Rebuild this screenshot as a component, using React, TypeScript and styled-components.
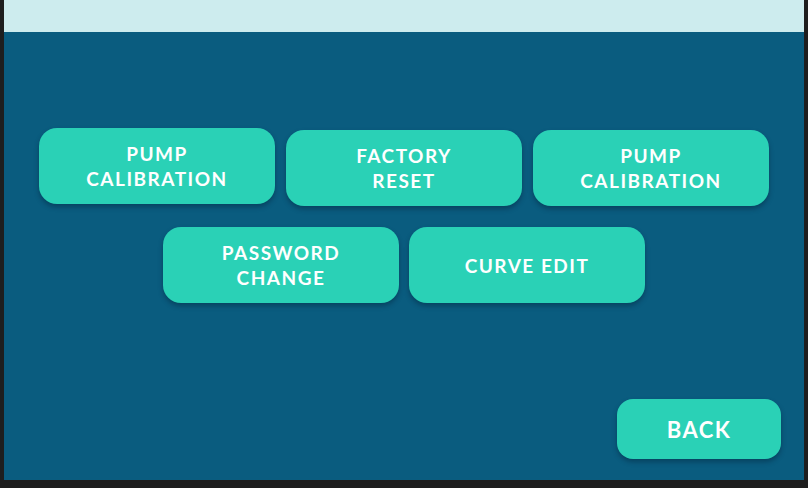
import React from "react";
import styled, { createGlobalStyle } from "styled-components";

const Global = createGlobalStyle`
  html, body { margin: 0; padding: 0; background: #1e1e1e; }
  body { font-family: "Lato", "Open Sans", sans-serif; }
`;

const Screen = styled.div`
  width: 800px;
  height: 480px;
  margin-left: 4px;
  display: flex;
  flex-direction: column;
  background: #0a5c7f;
`;

const TopBar = styled.div`
  height: 32px;
  background: #cdecee;
  flex: none;
`;

const Body = styled.div`
  flex: 1;
  display: flex;
  flex-direction: column;
  align-items: center;
  padding-top: 98px;
  box-sizing: border-box;
`;

const Grid = styled.div`
  display: flex;
  flex-direction: column;
  align-items: center;
  gap: 21px;
`;

const Row = styled.div<{ $gap: number }>`
  display: flex;
  align-items: flex-start;
  gap: ${(p) => p.$gap}px;
`;

const Tile = styled.button<{ $lift?: number }>`
  width: 236px;
  height: 76px;
  margin-top: ${(p) => -(p.$lift || 0)}px;
  border: none;
  border-radius: 18px;
  background: #2ad1b6;
  color: #ffffff;
  font-family: "Lato", "Open Sans", sans-serif;
  font-weight: 700;
  font-size: 19px;
  line-height: 25px;
  letter-spacing: 1.5px;
  text-align: center;
  box-shadow: 0 3px 5px rgba(0, 20, 40, 0.35);
  display: flex;
  align-items: center;
  justify-content: center;
  padding: 0;
  cursor: pointer;
`;

const Footer = styled.div`
  margin-top: auto;
  display: flex;
  justify-content: flex-end;
  padding: 0 23px 21px 0;
`;

const BackButton = styled.button`
  width: 164px;
  height: 60px;
  border: none;
  border-radius: 16px;
  background: #2ad1b6;
  color: #ffffff;
  font-family: "Lato", "Open Sans", sans-serif;
  font-weight: 700;
  font-size: 22px;
  letter-spacing: 1.5px;
  box-shadow: 0 3px 5px rgba(0, 20, 40, 0.35);
  cursor: pointer;
`;

export default function App() {
  return (
    <>
      <Global />
      <Screen>
        <TopBar />
        <Body>
          <Grid>
            <Row $gap={11}>
              <Tile $lift={2}>PUMP<br />CALIBRATION</Tile>
              <Tile>FACTORY<br />RESET</Tile>
              <Tile>PUMP<br />CALIBRATION</Tile>
            </Row>
            <Row $gap={10}>
              <Tile>PASSWORD<br />CHANGE</Tile>
              <Tile>CURVE EDIT</Tile>
            </Row>
          </Grid>
        </Body>
        <Footer>
          <BackButton>BACK</BackButton>
        </Footer>
      </Screen>
    </>
  );
}
